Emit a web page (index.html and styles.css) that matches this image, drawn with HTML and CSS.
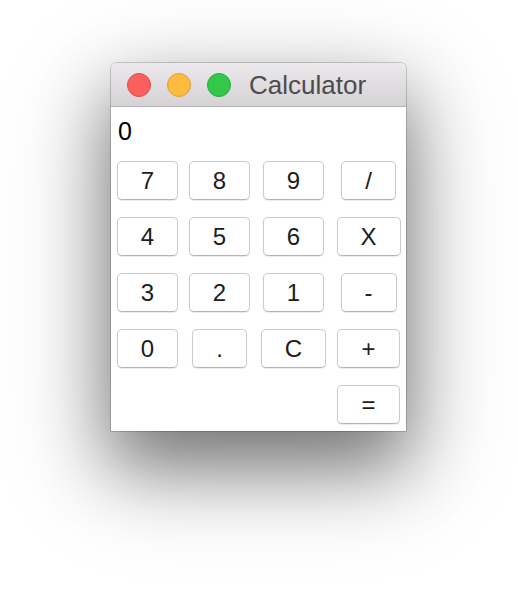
FILE: index.html
```html
<!DOCTYPE html>
<html>
<head>
<meta charset="utf-8">
<title>Calculator</title>
<link rel="stylesheet" href="styles.css">
</head>
<body>
<div class="window">
  <div class="titlebar">
    <span class="light light-red"></span>
    <span class="light light-yellow"></span>
    <span class="light light-green"></span>
    <span class="title">Calculator</span>
  </div>
  <div class="content">
    <div class="display">0</div>
    <div class="keys">
      <button class="key">7</button>
      <button class="key">8</button>
      <button class="key">9</button>
      <button class="key">/</button>
      <button class="key">4</button>
      <button class="key">5</button>
      <button class="key">6</button>
      <button class="key">X</button>
      <button class="key">3</button>
      <button class="key">2</button>
      <button class="key">1</button>
      <button class="key">-</button>
      <button class="key">0</button>
      <button class="key">.</button>
      <button class="key">C</button>
      <button class="key">+</button>
      <button class="key key-equals">=</button>
    </div>
  </div>
</div>
</body>
</html>
```

FILE: styles.css
```css
html, body {
  margin: 0;
  background: #ffffff;
}
html {
  height: 100%;
}
body {
  box-sizing: border-box;
  min-height: 100%;
  padding: 63px 0 0 111px;
  font-family: "Liberation Sans", Arial, sans-serif;
  overflow: hidden;
}
.window {
  width: 295px;
  height: 368px;
  border-radius: 5px 5px 0 0;
  background: #ffffff;
  overflow: hidden;
  box-shadow:
    0 34px 70px 0 rgba(0, 0, 0, 0.45),
    0 34px 110px 12px rgba(0, 0, 0, 0.18),
    0 0 0 0.5px rgba(0, 0, 0, 0.35);
  display: flex;
  flex-direction: column;
}
.titlebar {
  height: 43px;
  flex: none;
  border-bottom: 1px solid #b4b2b4;
  background: linear-gradient(#ebe9eb, #d5d3d5);
  display: flex;
  align-items: center;
  padding-left: 16px;
}
.light {
  width: 24px;
  height: 24px;
  box-sizing: border-box;
  border-radius: 50%;
  margin-right: 16px;
  flex: none;
}
.light-red { background: #fc605c; border: 1px solid #de4a46; }
.light-yellow { background: #fdbc40; border: 1px solid #de9f34; }
.light-green { background: #34c84a; border: 1px solid #27aa35; margin-right: 18px; }
.title {
  font-size: 26px;
  color: #4d4b4d;
  line-height: 30px;
  margin-top: 1px;
}
.content {
  flex: 1;
  padding: 10px 6px 0 6px;
}
.display {
  font-size: 25px;
  line-height: 28px;
  color: #000;
  padding-left: 1px;
  margin-bottom: 16px;
}
.keys {
  display: grid;
  grid-template-columns: 61px 61px 65px 63px;
  grid-auto-rows: 39px;
  column-gap: 11px;
  row-gap: 17px;
  justify-items: center;
}
.key {
  height: 39px;
  padding: 0 23px;
  margin: 0;
  background: #ffffff;
  border: 1px solid #cbcbcb;
  border-bottom-color: #b3b3b3;
  border-radius: 5px;
  box-shadow: 0 1px 1px rgba(0, 0, 0, 0.08);
  font-family: "Liberation Sans", Arial, sans-serif;
  font-size: 24px;
  color: #1c1c1c;
  line-height: 1;
}
.key-equals {
  grid-column: 4;
}
```
